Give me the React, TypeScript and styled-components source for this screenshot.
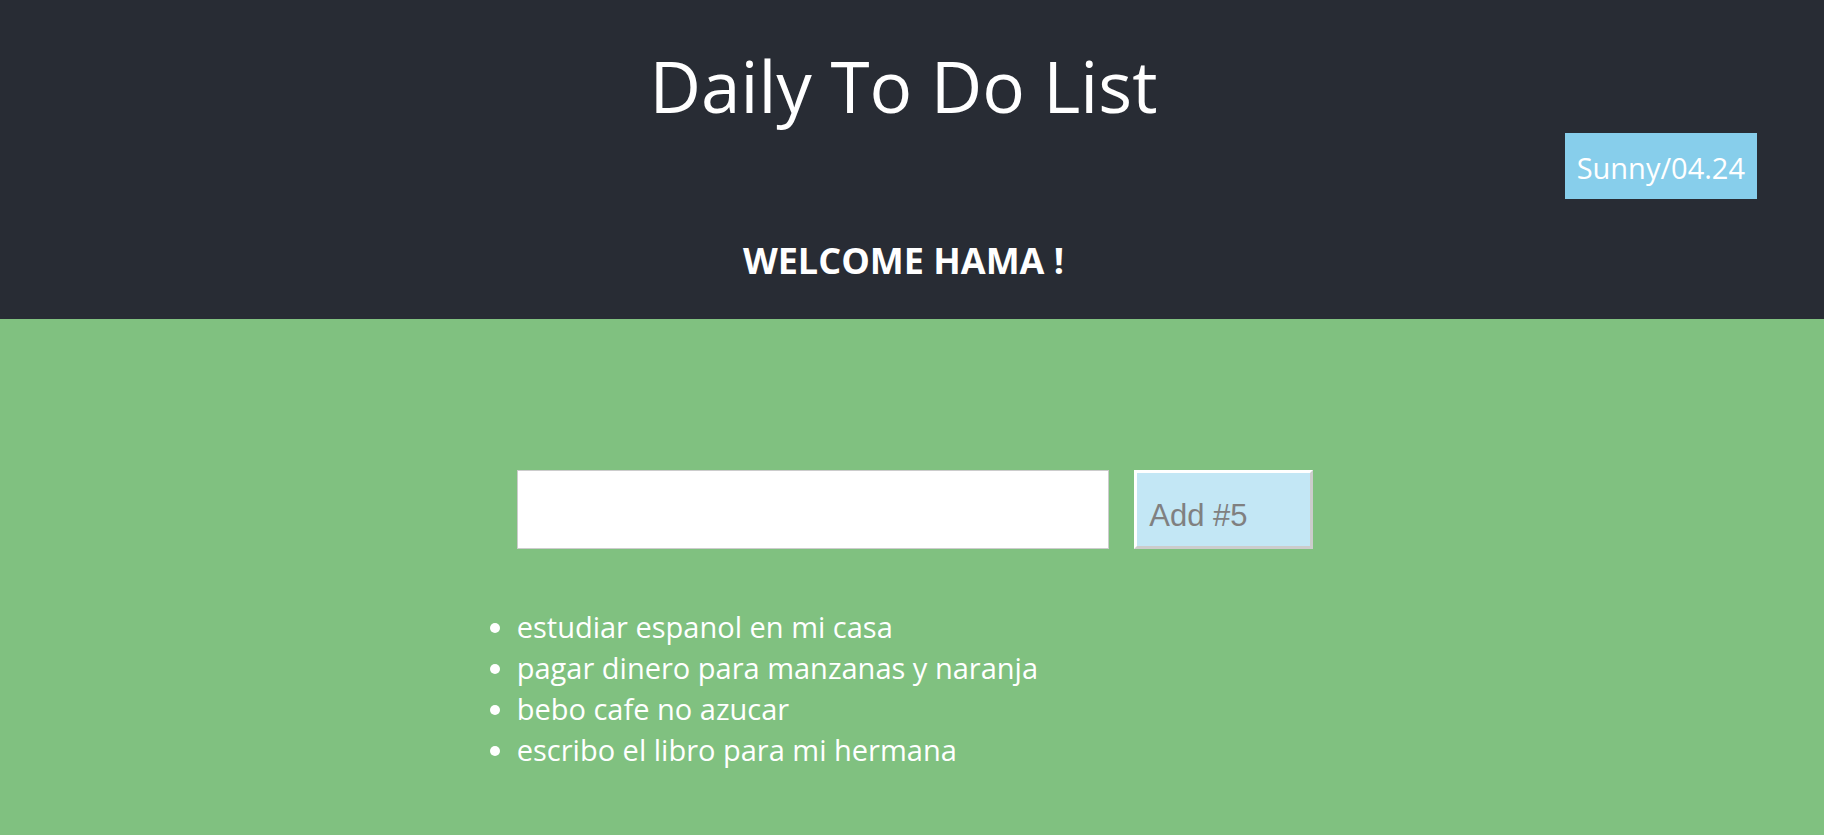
import React, { useState } from "react";
import styled, { createGlobalStyle } from "styled-components";

const GlobalStyle = createGlobalStyle`
  * { box-sizing: border-box; }
  body {
    margin: 0;
    background: #80c180;
    color: #fff;
    font-family: "Segoe UI", "Open Sans", "Noto Sans", sans-serif;
  }
`;

const Header = styled.header`
  display: flex;
  flex-direction: column;
  align-items: center;
  background: #282c34;
  padding: 38px 67px 36px 50px;
`;

const Title = styled.h1`
  margin: 0;
  font-size: 71px;
  font-weight: 400;
  line-height: 95px;
`;

const Weather = styled.div`
  align-self: flex-end;
  background: skyblue;
  padding: 15px 12px 11px;
  font-size: 29px;
  line-height: 40px;
`;

const Welcome = styled.h2`
  margin: 40px 0 0;
  font-size: 36px;
  font-weight: 700;
  line-height: 44px;
`;

const Main = styled.main`
  width: 44%;
  margin: 0 auto;
  padding: 151px 0 64px 6px;
`;

const Form = styled.form`
  display: flex;
  gap: 25px;
`;

const Field = styled.input`
  flex: 1;
  min-width: 0;
  height: 79px;
  padding: 12px;
  border: 1px solid #ccc;
  background: #fff;
  font: 31px "Liberation Sans", Arial, sans-serif;
`;

const AddButton = styled.button`
  width: 179px;
  height: 79px;
  padding: 12px 12px 0;
  border: 3px solid;
  border-color: #fff #ccc #ccc #fff;
  background: #c3e7f5;
  color: #808080;
  font: 31px "Liberation Sans", Arial, sans-serif;
  text-align: left;
`;

const List = styled.ul`
  margin: 57px 0 0;
  padding: 0;
  font-size: 29px;
  line-height: 41px;
`;

export default function App() {
  const [text, setText] = useState("");
  const [items, setItems] = useState([
    "estudiar espanol en mi casa",
    "pagar dinero para manzanas y naranja",
    "bebo cafe no azucar",
    "escribo el libro para mi hermana",
  ]);
  const add = (e: React.FormEvent) => {
    e.preventDefault();
    if (!text.trim()) return;
    setItems([...items, text]);
    setText("");
  };
  return (
    <>
      <GlobalStyle />
      <Header>
        <Title>Daily To Do List</Title>
        <Weather>Sunny/04.24</Weather>
        <Welcome>WELCOME HAMA !</Welcome>
      </Header>
      <Main>
        <Form onSubmit={add}>
          <Field aria-label="New task" value={text} onChange={(e) => setText(e.target.value)} />
          <AddButton type="submit">Add #{items.length + 1}</AddButton>
        </Form>
        <List>
          {items.map((item) => (
            <li key={item}>{item}</li>
          ))}
        </List>
      </Main>
    </>
  );
}
